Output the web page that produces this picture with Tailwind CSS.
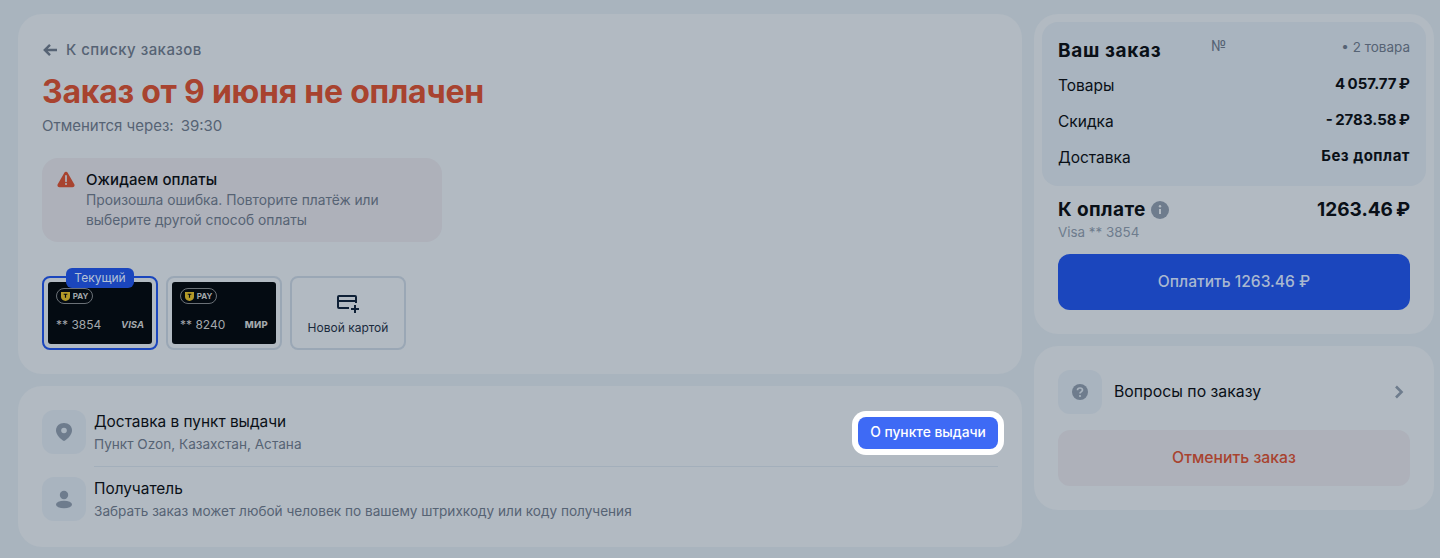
<!DOCTYPE html>
<html lang="en">
<head>
    <meta charset="UTF-8">
    <title>Заказ</title>
    <script src="https://cdn.jsdelivr.net/npm/@tailwindcss/browser@4"></script>
</head>
<body class="h-[558px] overflow-hidden bg-[#a9b4be] font-['Inter',sans-serif] text-[#0a1017]">
    <div class="flex gap-3 pl-[18px] pt-[14px]">
        <!-- Left column -->
        <div class="flex w-[1004px] flex-col gap-3">
            <div class="h-[360px] rounded-3xl bg-[#b2bac2] px-6 pt-6">
                <div class="flex h-6 items-center gap-[8px] text-[15px] font-medium tracking-[0.45px] text-[#566374]">
                    <svg class="h-4 w-4" viewBox="0 0 16 16" fill="none" stroke="#566374" stroke-width="2.400"><path d="M15 8H3M8 2.800 2.800 8 8 13.200"/></svg>
                    <span>К списку заказов</span>
                </div>
                <h1 class="mt-[10px] h-10 text-[32px] leading-10 font-bold tracking-[-0.24px] text-[#a8432f]">Заказ от 9 июня не оплачен</h1>
                <div class="mt-[2px] flex h-6 gap-[7px] text-[15px] leading-6 text-[#566374]"><span>Отменится через:</span><span>39:30</span></div>
                <div class="mt-5 flex h-[84px] w-[400px] gap-[11px] rounded-2xl bg-[#aeb1ba] pl-[15px] pt-[10px]">
                    <svg class="mt-[3px] h-[17px] w-[18px]" viewBox="0 0 20 18"><path d="M10 0.500c.9 0 1.600.5 2 1.200l7.200 12.600c.9 1.600-.2 3.400-2 3.400H2.800c-1.800 0-2.900-1.800-2-3.400L8 1.700c.4-.7 1.100-1.200 2-1.200Z" fill="#a8432f"/><path d="M10 5v6" stroke="#aeb1ba" stroke-width="2" stroke-linecap="round"/><circle cx="10" cy="14" r="1.200" fill="#aeb1ba"/></svg>
                    <div>
                        <div class="h-[22px] text-[15px] leading-6 font-medium tracking-[0.1px]">Ожидаем оплаты</div>
                        <div class="text-[13.800px] leading-5 text-[#566374]">Произошла ошибка. Повторите платёж или<br>выберите другой способ оплаты</div>
                    </div>
                </div>
                <div class="mt-[34px] flex gap-2">
                    <div class="relative h-[74px] w-[116px] rounded-lg border-2 border-[#1b46bd] p-1">
                        <div class="absolute left-[22px] top-[-10px] flex h-5 w-[68px] items-center justify-center rounded-md bg-[#1b46bd] text-xs text-[#b4c1d6]">Текущий</div>
                        <div class="flex h-full flex-col rounded-[3px] bg-[#040b12] px-2 pt-[6px]">
                            <div class="flex h-[16px] w-[37px] items-center justify-center gap-[3px] rounded-full border border-[#6b7177]">
                                <svg class="h-[9px] w-[9px]" viewBox="0 0 10 10"><path d="M0 0h10v5.500C10 8 7.500 9.500 5 10 2.500 9.500 0 8 0 5.500Z" fill="#b39a28"/><path d="M3 2.500h4M5 2.500v4" stroke="#040b12" stroke-width="1.300"/></svg>
                                <span class="text-[8px] leading-none font-bold text-[#a3a8ac]">PAY</span>
                            </div>
                            <div class="mt-[13px] flex items-center justify-between">
                                <span class="text-xs text-[#a3a8ac]">** 3854</span>
                                <span class="text-[9.500px] font-bold italic text-[#a3a8ac]">VISA</span>
                            </div>
                        </div>
                    </div>
                    <div class="h-[74px] w-[116px] rounded-lg border-2 border-[#9aa7b5] p-1">
                        <div class="flex h-full flex-col rounded-[3px] bg-[#040b12] px-2 pt-[6px]">
                            <div class="flex h-[16px] w-[37px] items-center justify-center gap-[3px] rounded-full border border-[#6b7177]">
                                <svg class="h-[9px] w-[9px]" viewBox="0 0 10 10"><path d="M0 0h10v5.500C10 8 7.500 9.500 5 10 2.500 9.500 0 8 0 5.500Z" fill="#b39a28"/><path d="M3 2.500h4M5 2.500v4" stroke="#040b12" stroke-width="1.300"/></svg>
                                <span class="text-[8px] leading-none font-bold text-[#a3a8ac]">PAY</span>
                            </div>
                            <div class="mt-[13px] flex items-center justify-between">
                                <span class="text-xs text-[#a3a8ac]">** 8240</span>
                                <span class="text-[9.500px] font-extrabold tracking-[0.3px] text-[#a3a8ac]">МИР</span>
                            </div>
                        </div>
                    </div>
                    <div class="flex h-[74px] w-[116px] flex-col items-center rounded-lg border-2 border-[#9aa7b5] pt-4">
                        <svg class="h-[20px] w-[24px]" viewBox="0 0 24 20" fill="none" stroke="#0e2036" stroke-width="2"><path d="M13 14H3a1 1 0 0 1-1-1V3a1 1 0 0 1 1-1h16a1 1 0 0 1 1 1v6M2 7h18M19 11v8M15 15h8"/></svg>
                        <span class="mt-[6px] text-xs leading-4 text-[#1b2a3d]">Новой картой</span>
                    </div>
                </div>
            </div>
            <div class="h-[161px] rounded-3xl bg-[#b2bac2] px-6 pt-6">
                <div class="flex gap-2">
                    <div class="flex h-11 w-11 items-center justify-center rounded-xl bg-[#a9b4bf]">
                        <svg class="h-5 w-5" viewBox="0 0 20 20"><path d="M10 1c4.600 0 8 3.200 8 7.400 0 4.200-4.200 8.400-8 10.600-3.800-2.200-8-6.400-8-10.600C2 4.200 5.400 1 10 1Z" fill="#6e7c8d"/><circle cx="10" cy="8.500" r="2.800" fill="#a9b4bf"/></svg>
                    </div>
                    <div class="flex flex-1 flex-col">
                        <div class="flex items-center justify-between pb-3">
                            <div>
                                <div class="text-[15.400px] leading-6">Доставка в пункт выдачи</div>
                                <div class="text-[13.600px] leading-5 text-[#566374]">Пункт Ozon, Казахстан, Астана</div>
                            </div>
                            <div class="mt-[1px] flex h-8 w-[140px] items-center justify-center rounded-lg bg-[#3e6af5] text-[13.800px] font-medium text-white ring-[6px] ring-white">О пункте выдачи</div>
                        </div>
                    </div>
                </div>
                <div class="ml-[52px] border-t border-[#a3afbb]"></div>
                <div class="mt-[10px] flex gap-2">
                    <div class="flex h-11 w-11 items-center justify-center rounded-xl bg-[#a9b4bf]">
                        <svg class="h-5 w-5" viewBox="0 0 20 20" fill="#6e7c8d"><circle cx="10" cy="6" r="4.200"/><ellipse cx="10" cy="15.500" rx="8" ry="3.800"/></svg>
                    </div>
                    <div>
                        <div class="text-[15.400px] leading-6">Получатель</div>
                        <div class="text-[13.600px] leading-5 text-[#566374]">Забрать заказ может любой человек по вашему штрихкоду или коду получения</div>
                    </div>
                </div>
            </div>
        </div>
        <!-- Right column -->
        <div class="flex w-[400px] flex-col gap-3">
            <div class="h-[320px] rounded-3xl bg-[#b2bac2] p-2">
                <div class="h-[164px] rounded-2xl bg-[#a9b4bf] px-4 pt-4">
                    <div class="relative flex h-6 items-start justify-between">
                        <span class="mt-[1px] text-[19px] leading-6 font-bold tracking-[0.65px]">Ваш заказ</span>
                        <span class="absolute left-[153px] top-[-2px] text-sm leading-5 text-[#566374]">№</span>
                        <span class="text-[13.500px] leading-[18px] text-[#566374]">• 2 товара</span>
                    </div>
                    <div class="mt-[12px] flex h-9 justify-between"><span class="text-[15.500px] leading-6">Товары</span><span class="text-[15px] leading-5 font-bold">4&#8201;057.77&#8201;₽</span></div>
                    <div class="flex h-9 justify-between"><span class="text-[15.500px] leading-6">Скидка</span><span class="text-[15px] leading-5 font-bold">-&#8201;2783.58&#8201;₽</span></div>
                    <div class="flex h-9 justify-between"><span class="text-[15.500px] leading-6">Доставка</span><span class="text-[15px] leading-5 font-bold tracking-[0.5px]">Без доплат</span></div>
                </div>
                <div class="px-4 pt-3">
                    <div class="flex h-6 items-center justify-between">
                        <div class="flex items-center gap-[5px]">
                            <span class="text-[19px] font-bold tracking-[0.4px]">К оплате</span>
                            <svg class="h-[18px] w-[18px]" viewBox="0 0 18 18"><circle cx="9" cy="9" r="9" fill="#6e7c8d"/><path d="M9 8v5" stroke="#b2bac2" stroke-width="2"/><circle cx="9" cy="5.200" r="1.200" fill="#b2bac2"/></svg>
                        </div>
                        <span class="text-[19px] font-bold">1263.46&#8201;₽</span>
                    </div>
                    <div class="text-[13.400px] leading-5 text-[#6e7c8d]">Visa ** 3854</div>
                    <div class="mt-3 flex h-14 items-center justify-center rounded-xl bg-[#1b46bd] text-[15.600px] font-medium text-[#a9b8d0]">Оплатить 1263.46 ₽</div>
                </div>
            </div>
            <div class="h-[164px] rounded-3xl bg-[#b2bac2] px-6 pt-6">
                <div class="flex h-11 items-center gap-3">
                    <div class="flex h-11 w-11 items-center justify-center rounded-xl bg-[#a9b4bf]">
                        <svg class="h-4 w-4" viewBox="0 0 16 16"><circle cx="8" cy="8" r="8" fill="#6e7c8d"/><path d="M5.500 6.200C5.500 4.800 6.600 4 8 4s2.500.9 2.500 2.100c0 1.800-2.500 1.700-2.500 3.400" fill="none" stroke="#a9b4bf" stroke-width="1.700"/><circle cx="8" cy="12" r="1.100" fill="#a9b4bf"/></svg>
                    </div>
                    <span class="flex-1 text-[15.800px]">Вопросы по заказу</span>
                    <svg class="h-4 w-4" viewBox="0 0 16 16" fill="none" stroke="#6e7c8d" stroke-width="2.600"><path d="M2 2.500 7.500 8 2 13.500"/></svg>
                </div>
                <div class="mt-4 flex h-14 items-center justify-center rounded-xl bg-[#aeb1ba] text-[15.750px] font-medium text-[#a8432f]">Отменить заказ</div>
            </div>
        </div>
    </div>
</body>
</html>
